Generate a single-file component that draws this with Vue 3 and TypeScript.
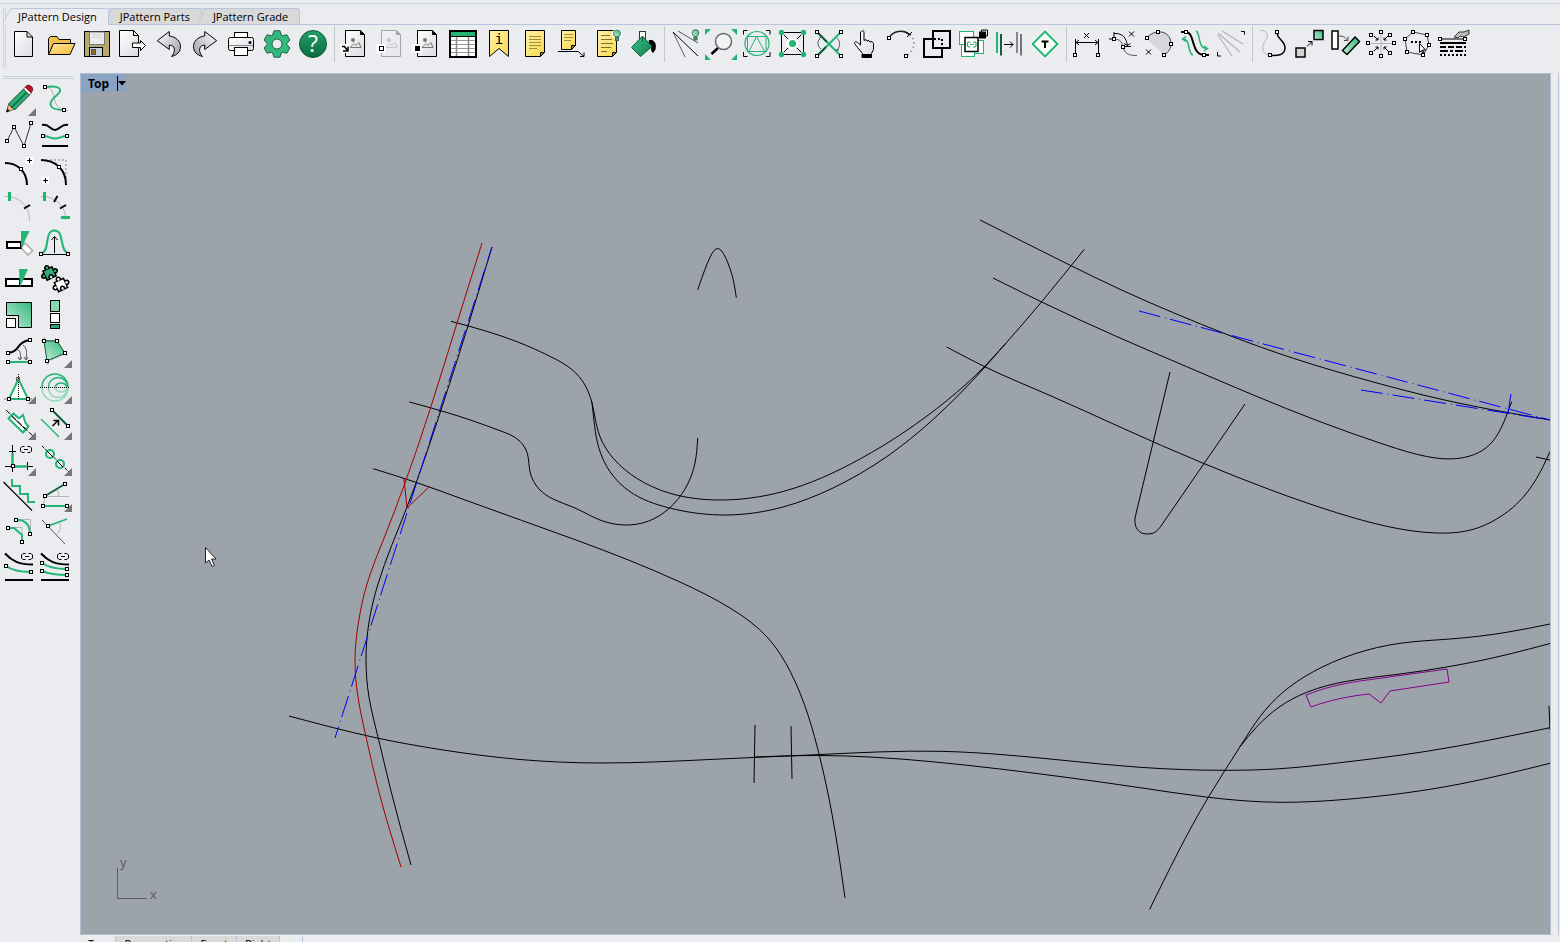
<script setup lang="ts">
interface Tool {
  name: string
  art: string
}
type Point = [number, number]

const G = '#22b573'
const D = '#0f5f3c'
const K = '#000'
const S = '#b4b4b4'

/* Small builders for the icon artwork, all on a 36 by 36 grid */
const line = (d: string, color = K, w = 1, extra = ''): string =>
  `<path d="${d}" fill="none" stroke="${color}" stroke-width="${w}" ${extra}/>`
const shape = (d: string, fill: string, color = K, w = 1): string =>
  `<path d="${d}" fill="${fill}" stroke="${color}" stroke-width="${w}"/>`
const box = (x: number, y: number, w: number, h: number, fill: string, color = K, sw = 1): string =>
  `<rect x="${x}" y="${y}" width="${w}" height="${h}" fill="${fill}" stroke="${color}" stroke-width="${sw}"/>`
const dot = (x: number, y: number, r: number, fill: string, color = 'none', sw = 1): string =>
  `<circle cx="${x}" cy="${y}" r="${r}" fill="${fill}" stroke="${color}" stroke-width="${sw}"/>`
const nodes = (...pts: Point[]): string =>
  pts.map(([x, y]) => box(Math.floor(x) - 1.5, Math.floor(y) - 1.5, 3, 3, '#fff')).join('')
const cross = (x: number, y: number): string => line(`M${x - 2.5} ${y - 2.5}l5 5m0-5l-5 5`)
const plus = (x: number, y: number): string =>
  box(x - 3, y - 3, 6, 6, '#fff', '#fff') + line(`M${x - 2.5} ${y}h5M${x} ${y - 2.5}v5`)
const corner = shape('M35 27v8h-8z', '#777', 'none')
const chain = (x: number, y: number): string =>
  line(`M${x - 1.5} ${y - 3}h-2.5l-1.5 1.5v3l1.5 1.5h2.5M${x + 1.5} ${y - 3}h2.5l1.5 1.5v3l-1.5 1.5h-2.5M${x - 2} ${y}h4`)
const bulb = (x: number, y: number): string =>
  dot(x, y - 1, 5, '#fff') +
  dot(x, y - 1.5, 3.5, 'url(#mint)', '#4d7a66') +
  box(x - 1.5, y + 2.5, 3, 3, '#3aa578', '#376b55')

const pictureDoc =
  shape('M8.5 4.5h15l4 4v22h-19z', 'url(#paper)') +
  shape('M23.5 4.5v4h4z', K) +
  dot(16, 14, 2, '#777') +
  line('M13 21.5l4-4 2 2 3-3 2 5z', '#777')
const note = (w: number, h: number): string => {
  const r = 8.5 + w
  const b = 4.5 + h
  return shape(`M8.5 4.5h${w}V${b - 4}L${r - 4} ${b}H8.5z`, 'url(#sun)') + shape(`M${r - 4} ${b}v-4h4z`, '#b5860b')
}

const gear = (() => {
  const pts: string[] = []
  for (let i = 0; i < 6; i++) {
    const mid = i * 60 - 90
    for (const [off, r] of [[-26, 10], [-17, 13.5], [17, 13.5], [26, 10]]) {
      const a = ((mid + off * (r > 11 ? 0.75 : 1)) * Math.PI) / 180
      pts.push(`${(18 + r * Math.cos(a)).toFixed(1)} ${(18 + r * Math.sin(a)).toFixed(1)}`)
    }
  }
  return `M${pts.join('L')}z`
})()

const undoArt = 'M6.3 14.7L18.3 5.5v4.5C25 11 29.5 15 29.5 20.5C29.5 26 26 29 20.5 30.5C24 27 25.5 19.5 18.3 19v4.5z'

const toolGroups: Tool[][] = [
  [
    { name: 'New', art: shape('M7.5 5.5H20l5.5 5.5v19.5h-18z', 'url(#paper)') + line('M20 5.5V11h5.5') },
    { name: 'Open', art: shape('M5.5 28.5V12.5l2-2h6.5l2 3h11.5v5', '#f0c04a') + shape('M5.5 28.5l5-11h21.5l-5 11z', 'url(#folder)') },
    {
      name: 'Save',
      art:
        box(5.5, 5.5, 25, 25, '#b5a96e') + box(10.5, 6, 15, 12.5, '#e9ecec', '#777') +
        line('M13 9h10M13 11.5h10', '#c9d3d0') + box(10.5, 21.5, 13, 9, '#c9cdd6') + box(12.5, 23.5, 4, 5, '#8a6d1e', '#555'),
    },
    { name: 'Export', art: shape('M4.5 4.5h14l5 5v21h-19z', 'url(#paper)') + line('M18.5 4.5v5h5') + shape('M17.5 17h8v-2.5l5 5-5 5v-3h-8z', '#fff') },
    { name: 'Undo', art: shape(undoArt, 'url(#steel)') },
    { name: 'Redo', art: `<g transform="matrix(-1 0 0 1 36 0)">${shape(undoArt, 'url(#steel)')}</g>` },
    {
      name: 'Print',
      art:
        box(11.5, 6.5, 13, 8, '#fff') + `<rect x="5.5" y="11.5" width="25" height="13" rx="2" fill="url(#paper)" stroke="#000"/>` +
        line('M6 19.5h24', '#888') + dot(27, 16.5, 1.5, K) + box(11.5, 21.5, 13, 8, '#fff'),
    },
    { name: 'Options', art: shape(gear, '#35b87f', '#1b5d42') + dot(18, 18, 5, '#ebecf0', '#1b5d42') },
    { name: 'Help', art: dot(18, 18, 13.5, 'url(#help)', '#0c5a33') + '<text x="18" y="26" font-size="23" text-anchor="middle" fill="#fff" font-family="Open Sans, sans-serif">?</text>' },
  ],
  [
    { name: 'Import image', art: pictureDoc + box(4, 18.5, 8, 8, '#fff', '#fff') + line('M5 20.5h2.5l3 4M11 20.5v4.5h-5', K, 1.5) },
    { name: 'Image frame', art: `<g opacity="0.3">${pictureDoc}</g>` + box(4, 18.5, 8, 8, '#fff', '#fff') + box(6.5, 20.5, 4, 4, '#fff') },
    { name: 'Image fill', art: pictureDoc + box(4, 18.5, 8, 8, '#fff', '#fff') + box(6.5, 20.5, 4, 4, K) },
    {
      name: 'Table',
      art:
        box(5, 5, 26, 26, '#fff', K, 2) + box(6, 6, 24, 4, G, 'none') + line('M6 10.5h24') +
        line('M6 14.5h24M6 18.5h24M6 22.5h24M6 26.5h24', '#999') + line('M11.5 11v19M23.5 11v19', '#888', 1.5),
    },
    { name: 'Bookmark', art: shape('M8.5 4.5h19v26l-9.5-8-9.5 8z', 'url(#sun)') + '<text x="18" y="18" font-size="14" text-anchor="middle" font-family="DejaVu Sans Mono, monospace">i</text>' },
    { name: 'Note', art: note(19, 26) + line('M12 10.5h12M12 13.5h12M12 16.5h12M12 19.5h12M12 22.5h8', '#a08a3c') },
    { name: 'Leader note', art: note(14, 19) + line('M11 8.5h9M11 11.5h9M11 14.5h7', '#a08a3c') + line('M5 25.5h20l6 5M27 30.5h4v-4') },
    { name: 'Note visibility', art: note(19, 26) + line('M12 9.5h9M12 13.5h11M12 17.5h12M12 21.5h10M12 25.5h6', '#7c6c35') + bulb(28, 9) },
    {
      name: 'Fill',
      art:
        shape('M24 14.5c6-1 7 4 6 9l-2 3c-2-1-1-5-3-8z', K) + box(14.5, 5.5, 6, 7, '#fff', '#333') +
        shape('M6.5 21.5l11-11.5L27 20.5 15.5 30.5z', 'url(#fill)', D) + line('M17.5 10v6', D),
    },
  ],
  [
    { name: 'Light', art: line('M6 6l12 25', '#666') + line('M6 6l25 24', K) + line('M11 5l20 12', '#555') + bulb(28.5, 8.5) },
    {
      name: 'Zoom',
      art:
        shape('M2 3h6l-6 6zM34 3h-6l6 6zM2 34h6l-6-6zM34 34h-6l6-6z', G, 'none') + line('M15 22l-6.5 6', K, 2.5) +
        dot(20.5, 15.5, 8, '#f2f3f5', '#666', 1.5),
    },
    { name: 'Zoom shapes', art: line('M4.5 8.5v-4h4M27 4.5h4v4M4.5 26v4.5h4M27 30.5h4v-4.5') + dot(18, 17.5, 12, 'none', G, 1.2) + line('M8.5 25.5v-15h18.5v15zM10 25.5l7.5-15 8 15', G) },
    {
      name: 'Control points',
      art: box(6.5, 6.5, 22, 22, 'none') + line('M9 9l17 17M26 9L9 26') + dot(17.5, 17.5, 6, '#fff') + dot(17.5, 17.5, 3.5, G) +
        dot(6.5, 6.5, 2.7, G) + dot(28.5, 6.5, 2.7, G) + dot(6.5, 28.5, 2.7, G) + dot(28.5, 28.5, 2.7, G),
    },
    {
      name: 'Swap ends',
      art:
        line('M6 6l24 24M30 6L6 30', G, 2) + line('M15 21l-9 9M6 6l10 10', D, 2) + line('M10 11c-4 4-4 9 0 12M8 13l2-2 2 2M26 12c4 4 3 9 0 12M24 23l2 2 2-2', '#555') +
        nodes([6, 6], [30, 6], [6, 30], [30, 30]),
    },
    { name: 'Pan', art: shape('M14.5 5.5c1-1.5 2.5-1 2.5 1v8l2-1 1 1.5 2-.5 1 1.5 2-.5 1.5 2v6l-2 4v4h-9v-4l-5-6-3-4c0-2 2-2 3-1l3 2.5v-13z', 'url(#paper)') + box(15, 28.5, 9, 2.5, K) },
    { name: 'Arc', art: line('M6 12C10 5 20 3 26.5 8.5', '#222', 1.5) + line('M26.5 8.5C33 14 33 23 23 30', '#888', 1.5, 'stroke-dasharray="1.5 3"') + line('M24 11l5-5M22 6l6 3') + nodes([6, 12], [23, 30]) },
    { name: 'Boolean', art: line('M5 13h18v18h-18zM14 5h17v17h-17z', K, 2) + line('M15 13h8v8', '#ebecf0', 2) + line('M15 13h8v8', K, 2, 'stroke-dasharray="2 2"') },
    {
      name: 'Linked copies',
      art:
        box(4.5, 5.5, 14, 13, '#fff', G) + box(14.5, 14.5, 14, 13, '#fff', G) + box(6.5, 18.5, 13, 12, '#fff', G) +
        box(10, 11.5, 13, 14, '#fff', K, 1.5) + line('M15.5 16h-2l-1 1v3l1 1h2M18 16h2l1 1v3l-1 1h-2M15 18.5h4', G, 1.2) +
        box(24.5, 6, 6, 6, K) + line('M26.5 6v-2h6v6h-2'),
    },
    { name: 'Offset lines', art: line('M6 6v21', G, 2) + line('M10 8v21.5', D, 2) + line('M13 18.5h9M19 15.5l3 3-3 3') + line('M26 6v21', '#888', 2) + line('M30 8v21.5', '#777', 2) },
    { name: 'Text tag', art: line('M18 5.5L30.5 18 18 30.5 5.5 18z', '#fff', 4) + shape('M18 5.5L30.5 18 18 30.5 5.5 18z', '#f6fbf8', G, 2) + line('M14.5 15.5h7M18 15v7', K, 2) },
  ],
  [
    { name: 'Linear dimension', art: line('M6.5 13v15M29.5 13v15M7 16.5h22M10 14l-3 2.5 3 2.5M26 14l3 2.5-3 2.5') + cross(17.5, 9.5) + nodes([6, 29], [29, 29]) },
    { name: 'Curve dimension', art: line('M9 13C19 13 16 21 19 21M18 21C20 27 22 29.5 32 29.5', '#555') + line('M4 13h5M9 6v6M9 7.5C18 7 21 12 22.5 19.5M19 17.5l3.5 2 3-2M20 20.5h6') + cross(26.5, 8) + nodes([9, 13], [18, 21]) },
    { name: 'Arc dimension', art: shape('M6 12C12 2 30 4 30 18C30 22 27 27 23 29L8 15z', '#d6d7db', 'none') + line('M6 12C12 3 30 3 30 18C30 22 28 26 23 29', '#444') + cross(7.5, 26) + nodes([6, 12], [17, 6], [30, 18], [23, 29]) },
    {
      name: 'Match curves',
      art:
        line('M16 29C10 27 14 13 6 13M9 10.5l-3.5 2.5 3.5 2.5', G, 1.5) + line('M19 5C24 7 20 22.5 30 22.5M27 20l3.5 2.5-3.5 2.5', G, 1.5) +
        line('M4 6h5c9 0 5 23 18 23h5', K, 2) + nodes([9, 6], [27, 29]),
    },
    { name: 'Fan lines', art: line('M5 9l14 21M5 7l22 19M9 5l21 13', S, 1.2) + line('M28 5.5h3.5v3M4.5 26v4h3.5') },
  ],
  [
    { name: 'Sketch curve', art: line('M5 4.5C16 4 12 13 9 17C6 23 9 29 15 29.5', S) + line('M22 6C22 14 30 14 30 22C30 29 23 30 15 29.5', K, 1.5) + nodes([22, 6], [15, 29]) },
    { name: 'Move', art: box(5, 22, 9, 9, '#d4d4d4', K, 1.5) + box(23, 4.5, 9, 9, 'url(#mint)', K, 1.5) + line('M16 20.5l5-5M17 15.5h4v4') },
    { name: 'Rotate', art: box(5, 5, 6, 18, '#fff', K, 1.5) + shape('M15.5 24.5L28 11l4.5 4.5L20 28.5z', 'url(#mint)', K, 1.5) + line('M12 10c5 0 7 2 8 4.5M17 14.5h4v-4', '#444') },
    {
      name: 'Gather',
      art:
        line('M5 17.5h26M18 6v24', S) + line('M11 10l4 4M25 10l-4 4M11 25l4-4M25 25l-4-4M15 11.5v2.5h-2.5M21 11.5v2.5h2.5M15 23.5v-2.5h-2.5M21 23.5v-2.5h2.5') +
        nodes([18, 6], [27, 9], [31, 17], [27, 27], [18, 30], [8, 27], [5, 17], [8, 9]),
    },
    { name: 'Select points', art: line('M14 6l14 3 2 10-6 10-16-3-2-13z', '#444') + line('M12 16h10', K, 2, 'stroke-dasharray="2 2"') + shape('M20.5 17.5v9l2-2 1.5 3 1-.5-1.5-3h3z', '#fff') + nodes([14, 6], [28, 9], [30, 19], [24, 29], [8, 26], [6, 13]) },
    {
      name: 'Line types',
      art:
        line('M5 13h25') + line('M5 17h26', K, 2) + line('M5 21h26', K, 2, 'stroke-dasharray="6 2"') + line('M5 25h26', K, 2, 'stroke-dasharray="8 2 3 2"') +
        line('M5 29h26', K, 2, 'stroke-dasharray="2 2"') + shape('M19 11l5-5h5l5-2v4l-5 3-4-1-2 2z', '#bbb', '#333') + nodes([5, 13], [30, 13]),
    },
  ],
]

/* Jigsaw piece: round knobs at the top and sides, a notch at the bottom */
const puzzle =
  'M-5-5h3.5a2 2 0 1 1 3 0h3.5v3.5a2 2 0 1 1 0 3v3.5h-3.5a2 2 0 1 0-3 0h-3.5v-3.5a2 2 0 1 1 0-3z'

const sideTools: Tool[] = [
  {
    name: 'Pencil',
    art:
      shape('M5.5 31l2.5-8 5 5z', '#555', K) + shape('M7.5 23L22.5 8l6 6L13.5 29z', G, '#333') + shape('M7.5 23.5l-1 4 2.5 2.5 4-1.5z', '#e7b98c', '#555', 0.5) +
      line('M10.5 26.5l15-15', D, 1.5) + shape('M22.5 8l2-2 6 6-2 2z', '#fff', '#555') + shape('M24.5 6l1.5-1.5c3-1 6.5 2 5.5 5l-1.5 2z', '#c1121f', '#700') + corner,
  },
  { name: 'Free curve', art: line('M8 6C16 6 16 14 18 20C20 26 22 29 31 29.5', S) + line('M8 6C22 4 27 8 20 14C10 22 11 29 27 29', G, 2) + nodes([8, 6], [27, 29]) },
  { name: 'Polyline', art: line('M6 24l7-14 10 19 7-23', '#333') + nodes([6, 24], [13, 10], [23, 29], [30, 6]) },
  { name: 'Parallel curve', art: line('M5 8C12 6 13 13 18 13S25 6 31 8', K, 2) + line('M6 19C12 19 13 21.5 18 21.5S24 19 30 19', G, 2) + line('M5 29h26', K, 2) + nodes([6, 19], [30, 19]) },
  { name: 'Add point', art: line('M4 10C16 10 26 18 26 32', K, 2) + nodes([20, 16]) + plus(28.5, 7.5) },
  { name: 'Add corner point', art: line('M13 7h16v18', S, 2, 'stroke-dasharray="2 2"') + line('M4 7C18 7 29 16 29 32', K, 2) + nodes([22, 14]) + plus(8.5, 27.5) },
  { name: 'Mark curve', art: line('M4 7.5C18 7 29 17 28.5 32', S) + line('M8.5 3v9', G, 3) + line('M23 19.5l6-3.5', K, 2) },
  { name: 'Divide curve', art: line('M4 7.5C18 7 29 17 28.5 31', S) + line('M7.5 3v9', G, 3) + line('M17 13l3.5-6M23 19.5l6-3.5', K, 2) + line('M24 28.5h9', G, 3) },
  { name: 'Cut segment', art: shape('M24 18l7.5 7.5-4.5 4.5-7-7z', '#fff', '#aaa', 1.5) + box(6, 17, 14, 6, '#fff', K, 2) + shape('M20 6h8.5l-8.5 18z', G, 'none') },
  { name: 'Bell curve', art: line('M5 28C13 26 7 5.5 17.5 5.5S22 26 31 28', G, 2) + line('M17.5 28V12M14.5 15l3-3.5 3 3.5M4 29.5h28') + nodes([4, 29], [31, 29]) },
  { name: 'Split segment', art: box(5, 18, 26, 7, '#fff', K, 2) + line('M18.5 18v7', K) + shape('M18 8h9l-8 18z', G, 'none') },
  {
    name: 'Join pieces',
    art: `<g transform="translate(12.5 12.5) rotate(-25)">${shape(puzzle, '#35a877', K, 1.5)}</g><g transform="translate(24 24) rotate(-25)">${shape(puzzle, '#fff', K, 1.5)}</g>`,
  },
  { name: 'Scale piece', art: shape('M5.5 5.5h25v25h-13v-12h-12z', 'url(#mint)') + box(5.5, 21.5, 9, 9, '#fff') },
  { name: 'Stack pieces', art: box(13.5, 3.5, 9, 11, '#8bd8b0') + box(13.5, 16.5, 9, 9, '#fff') + box(13.5, 27.5, 9, 4, '#2ea574') },
  { name: 'Straighten', art: line('M7 20C19 19 15 9 29 7', K, 2) + line('M16 16c4 2 4 7 3 10M22 12c4 3 4 8 3 14M17 24l2 3 2-3M23 24l2 3 2-3', '#555') + line('M7 29h22', G, 2) + nodes([7, 20], [29, 7], [7, 29], [29, 29]) },
  { name: 'Polygon area', art: line('M4 7.5h19M7 4l4 28M18 5l12 18M8 29l22-9', '#999') + shape('M7 8h13l8 12-18 8z', 'url(#mint)', D) + nodes([7, 8], [20, 8], [28, 20], [10, 28]) + corner },
  { name: 'Dart', art: line('M3 30h28', '#777') + shape('M17.5 10L8 30h19z', '#fff', G, 2) + line('M17.5 5v25', K, 1, 'stroke-dasharray="1 1"') + nodes([8, 30], [27, 30]) + box(15.5, 8.5, 3, 3, 'none', '#666') + corner },
  {
    name: 'Mirror circles',
    art:
      line('M5 18a13 13 0 0 1 26 0M11.5 18a9.5 9.5 0 0 1 19 0M18 18a6.5 6.5 0 0 1 12 0', G, 1.5) +
      line('M5 19a13 13 0 0 0 26 0M11.5 19a9.5 9.5 0 0 0 19 0M18 19a6.5 6.5 0 0 0 12 0', '#92d9b6', 1.5) + line('M3 18.5h29', K, 1, 'stroke-dasharray="1 1"') + corner,
  },
  { name: 'Seam strip', art: shape('M12.5 8.5l5.5 5 4-3.5 2.5 8 3 3.5-5.5 6L7.5 13.5z', '#fff', G, 2) + line('M5 5l28 27', K, 1, 'stroke-dasharray="6 2"') + line('M11 11.5L24 24') + corner },
  { name: 'Move parallel', art: line('M15 5l16 16', D, 2) + line('M4 14l18 18', G, 1.5) + line('M15.5 21l6-6M16.5 15.5h5v5', K, 1.5) + nodes([15, 5], [31, 21]) + corner },
  { name: 'Square up', art: line('M11.5 4v27M4 25.5h28M8 10.5h7M26.5 21v8') + line('M11.5 12v13.5h15', G, 2.5) + nodes([12, 25]) + chain(25, 8.5) + corner },
  { name: 'Circles on line', art: line('M5 5l28 27', K, 1, 'stroke-dasharray="3 1"') + dot(13, 13, 4, '#ebecf0', G, 2) + dot(23, 23, 4, '#ebecf0', G, 2) + line('M10 10l6 6M20 20l6 6') + corner },
  { name: 'Steps', art: line('M2.5 5L31 33.5', K, 1.2) + line('M11 2v7h8v8h8v8h7', G, 2) },
  { name: 'Angle copy', art: line('M8 19.5h24M8 19l-2 10M20 13q3 3 1 7', S) + line('M8 19l20-12', D, 2) + line('M6 29h24', G, 2) + nodes([8, 19], [28, 7], [6, 29], [30, 29]) + corner },
  { name: 'Fillet', art: line('M15 6.5h14.5v14M7 14.5h14v14', S) + line('M15 7C24 6 29 12 29 21M7 15h6L21 22v7', G, 2) + nodes([15, 7], [29, 21], [7, 15], [21, 29]) },
  { name: 'Angle', art: line('M5 7l23 24', '#555') + line('M22 9c3 5 1 10-3 13', S) + line('M11 13l19-7', G, 1.5) + nodes([11, 13]) },
  { name: 'Linked offset', art: line('M4 4.5C11 12 18 15.5 32 15.5', K, 2) + line('M5 17C12 22 20 23 30 23', G, 2) + line('M4 31h28', K, 2) + nodes([5, 17], [30, 23]) + chain(26, 7.5) },
  {
    name: 'Linked multi offset',
    art: line('M4 4.5C11 12 18 15.5 32 15.5', K, 2) + line('M5 14C12 19 20 20 30 20M5 22C12 25 20 26 30 26', G, 2) + line('M4 31h28', K, 2) + nodes([5, 14], [30, 20], [5, 22], [30, 26]) + chain(26, 7.5),
  },
]

const tabs = ['JPattern Design', 'JPattern Parts', 'JPattern Grade']
const activeTab = tabs[0]
const viewTabs = ['Top', 'Perspective', 'Front', 'Right', '+']

/* Slopes of a natural cubic spline over knot spacing h */
function slopes(v: number[], h: number[]): number[] {
  const n = v.length
  const a = new Array<number>(n).fill(0)
  const b = new Array<number>(n).fill(2)
  const c = new Array<number>(n).fill(0)
  const r = new Array<number>(n).fill(0)
  c[0] = 1
  r[0] = (3 * (v[1] - v[0])) / h[0]
  a[n - 1] = 1
  r[n - 1] = (3 * (v[n - 1] - v[n - 2])) / h[n - 2]
  for (let i = 1; i < n - 1; i++) {
    a[i] = 1 / h[i - 1]
    c[i] = 1 / h[i]
    b[i] = 2 * (a[i] + c[i])
    r[i] = 3 * ((v[i] - v[i - 1]) / h[i - 1] ** 2 + (v[i + 1] - v[i]) / h[i] ** 2)
  }
  for (let i = 1; i < n; i++) {
    const m = a[i] / b[i - 1]
    b[i] -= m * c[i - 1]
    r[i] -= m * r[i - 1]
  }
  const out = new Array<number>(n).fill(0)
  out[n - 1] = r[n - 1] / b[n - 1]
  for (let i = n - 2; i >= 0; i--) out[i] = (r[i] - c[i] * out[i + 1]) / b[i]
  return out
}

/* Smooth curve through a flat list of x, y pairs */
function spline(flat: number[]): string {
  const x = flat.filter((_, i) => i % 2 === 0)
  const y = flat.filter((_, i) => i % 2 === 1)
  const h = x.slice(1).map((v, i) => Math.hypot(v - x[i], y[i + 1] - y[i]))
  const sx = slopes(x, h)
  const sy = slopes(y, h)
  let d = `M${x[0]} ${y[0]}`
  h.forEach((len, i) => {
    const k = len / 3
    const c = [x[i] + sx[i] * k, y[i] + sy[i] * k, x[i + 1] - sx[i + 1] * k, y[i + 1] - sy[i + 1] * k]
    d += `C${c.map((v) => v.toFixed(2)).join(' ')} ${x[i + 1]} ${y[i + 1]}`
  })
  return d
}

const blackCurves: string[] = [
  [492, 247, 468, 326, 441, 410, 407, 507, 378, 584, 369, 622, 366, 660, 369, 697, 378, 737, 391, 791, 411, 865],
  [451, 321.3, 486.7, 331.3, 517, 341.7, 553.3, 358, 571.7, 369.3, 585, 385, 591.7, 402, 594.5, 415, 600, 436.7, 613.3, 458.3, 636.7, 478.3, 670, 493.3, 720, 500, 783, 491.5, 860, 459, 946.7, 400.7, 984.3, 366.7, 1006.7, 342.3, 1041.7, 301.7, 1084.3, 249.3],
  [592, 402, 594.7, 426.7, 598.5, 446.7, 610, 471.7, 630, 491.7, 668.3, 507.7, 727, 515, 783, 507, 833, 488, 887, 456.5, 933, 419.5, 985, 367, 1006.7, 342.3],
  [409.3, 402, 440.7, 410.7, 473.3, 421, 500, 430.7, 520, 441.3, 527.3, 453.3, 530, 471.7, 540, 490, 552, 498.5, 575, 508, 600, 520, 625, 525, 648.3, 521.2, 669, 508.5, 685, 489, 695, 463, 697.7, 438],
  [373.3, 468.7, 417, 482.7, 467, 500.7, 576, 540, 680, 582, 730, 608, 768, 638, 791, 673, 808, 715, 820, 758, 832, 814, 845, 898],
  [697.7, 290, 706.7, 265, 717.7, 248.5, 728.3, 264, 736.3, 297.7],
  [289, 716, 377, 738, 440, 749.5, 520, 759.5, 600, 763, 720, 759, 820, 754.5, 940, 751.3, 1070, 761, 1140, 767.3, 1225, 770.3, 1280, 768.7, 1340, 762.7, 1426.7, 751.3, 1550, 727.7],
  [754, 757, 820, 755.5, 870, 757, 930, 761.5, 1000, 769, 1140, 787.7, 1208.3, 797.3, 1280, 802.3, 1346.7, 799.3, 1460, 784, 1550, 763.3],
  [1149.7, 909.3, 1208.3, 797.3, 1240, 746.7, 1260, 716.7, 1281.7, 693.3, 1313.3, 671.7, 1353.3, 654.3, 1400, 643.3, 1450, 639, 1506.7, 632.3, 1550, 624],
  [1240, 746.7, 1257, 726.5, 1280, 706.5, 1306.7, 692.3, 1346.7, 681.3, 1400, 674, 1446.7, 667, 1506.7, 654.7, 1550, 643.5],
  [980, 220, 1071.7, 266, 1120, 289.3, 1173.3, 312.7, 1230, 335.7, 1293.3, 358.3, 1373.3, 382, 1440, 399, 1508.3, 412.7, 1550, 420],
  [993, 278, 1041.7, 302, 1120, 338, 1186.7, 366.7, 1253.3, 395, 1320, 421.7, 1386.7, 445.3, 1426.7, 456.5, 1448.3, 458.9, 1470, 456, 1486.7, 447.3, 1498.3, 433.3, 1507.7, 412.3, 1511.7, 401.7],
  [946.7, 347, 986, 367.3, 1050, 395.5, 1120, 427, 1203.3, 463.3, 1270, 489.7, 1336.7, 512.7, 1386.7, 526.3, 1436.7, 533, 1473.3, 529.3, 1496.7, 519, 1516.7, 504, 1536.7, 478.3, 1550, 451.7],
].map(spline)
blackCurves.push(
  'M1170 372L1135 518C1134 528 1139 534 1147 534S1157 531 1161 526L1245 404',
  'M755 725L754 783M791 726L792 779M1549 706L1550 730M1536 457L1550 460',
)
const redCurve = spline([482, 243, 457, 323, 430.5, 408, 405, 483, 383.3, 540, 367, 584, 358.5, 622, 355, 660, 358, 697, 366, 737, 379, 792, 401, 867])
</script>

<template>
  <div class="app">
    <svg class="defs" width="0" height="0" aria-hidden="true">
      <defs>
        <linearGradient id="paper" x1="0" y1="0" x2="1" y2="1"><stop offset="0" stop-color="#fff" /><stop offset="1" stop-color="#d9dbe0" /></linearGradient>
        <linearGradient id="steel" x1="0" y1="0" x2="1" y2="1"><stop offset="0" stop-color="#fff" /><stop offset="1" stop-color="#9a9da3" /></linearGradient>
        <linearGradient id="sun" x1="0" y1="0" x2="1" y2="1"><stop offset="0" stop-color="#fff2a8" /><stop offset="1" stop-color="#f8d84e" /></linearGradient>
        <linearGradient id="folder" x1="0" y1="0" x2="1" y2="1"><stop offset="0" stop-color="#ffe9a0" /><stop offset="1" stop-color="#f5b93a" /></linearGradient>
        <linearGradient id="mint" x1="0" y1="1" x2="1" y2="0"><stop offset="0" stop-color="#c2ecd6" /><stop offset="1" stop-color="#35b87f" /></linearGradient>
        <linearGradient id="fill" x1="0" y1="0" x2="1" y2="1"><stop offset="0" stop-color="#3cc48a" /><stop offset="1" stop-color="#0f7f4e" /></linearGradient>
        <linearGradient id="help" x1="0" y1="0" x2="0" y2="1"><stop offset="0" stop-color="#1fa066" /><stop offset="1" stop-color="#0c6b40" /></linearGradient>
      </defs>
    </svg>

    <header class="header">
      <div class="grip"></div>
      <div class="ribbon">
        <nav class="tabs">
          <button v-for="tab in tabs" :key="tab" type="button" class="tab" :class="{ active: tab === activeTab }">
            <span>{{ tab }}</span>
          </button>
        </nav>
        <div class="toolbar">
          <div v-for="(group, g) in toolGroups" :key="g" class="group">
            <button v-for="tool in group" :key="tool.name" type="button" class="tool" :aria-label="tool.name">
              <svg viewBox="0 0 36 36" v-html="tool.art"></svg>
            </button>
          </div>
        </div>
      </div>
    </header>

    <div class="body">
      <aside class="side">
        <div class="side-grip"></div>
        <div class="side-tools">
          <button v-for="tool in sideTools" :key="tool.name" type="button" class="tool" :aria-label="tool.name">
            <svg viewBox="0 0 36 36" v-html="tool.art"></svg>
          </button>
        </div>
      </aside>

      <main class="viewport">
        <svg class="scene" viewBox="81 74 1469 860" preserveAspectRatio="xMinYMin slice">
          <g class="black"><path v-for="(d, i) in blackCurves" :key="i" :d="d" /></g>
          <g class="red">
            <path :d="redCurve" />
            <path d="M404 479L407 508L429 487" />
          </g>
          <g class="blue">
            <path class="long" d="M335 738L492 247" />
            <path d="M1139 311L1550 420M1361 390L1550 420" />
            <path class="solid" d="M1511 394L1508 413" />
          </g>
          <path class="purple" d="M1306 695C1324 688 1340 684 1360 681L1447 669L1449 682L1390 691L1381 703L1369 694C1350 696 1330 700 1311 707Z" />
          <g class="axis">
            <path d="M117.5 868V898.5H147" />
            <text x="120" y="867">y</text>
            <text x="150" y="899">x</text>
          </g>
          <path class="pointer" d="M205.5 547.5V563L209 560L212 566.5L214.5 565.5L211.5 559H216Z" />
        </svg>
        <button type="button" class="view-title">
          <span>Top</span>
          <svg width="9" height="15" viewBox="0 0 9 15"><path d="M.5 0V15" stroke="#000" /><path d="M1 5H9L5 9.5Z" /></svg>
        </button>
      </main>
      <div class="edge"></div>
    </div>

    <footer class="view-tabs">
      <button v-for="(tab, i) in viewTabs" :key="tab" type="button" :class="{ current: i === 0 || i === 4 }">{{ tab }}</button>
    </footer>
  </div>
</template>

<style>
body {
  margin: 0;
  background: #ebecf0;
}
</style>

<style scoped>
.app {
  display: flex;
  flex-direction: column;
  height: 100vh;
  overflow: hidden;
  background: #ebecf0;
  color: #000;
  font: 11px 'Open Sans', 'Noto Sans', sans-serif;
}
.defs {
  position: absolute;
}
button {
  margin: 0;
  padding: 0;
  border: 0;
  background: none;
  color: inherit;
  font: inherit;
}
.header {
  display: flex;
  margin-top: 3px;
  border-top: 1px solid #ccd2e0;
}
.grip {
  box-sizing: border-box;
  width: 3px;
  margin: 4px 1px 5px 3px;
  border: 1px solid #ccd2e0;
  border-width: 0 1px;
}
.ribbon {
  flex: 1;
  min-width: 0;
}
.tabs {
  display: flex;
  padding-top: 4px;
  border-bottom: 1px solid #b9c5dc;
}
.tab {
  box-sizing: border-box;
  position: relative;
  height: 16px;
  padding: 0 11px;
  line-height: 16px;
  border-top: 1px solid #b9c5dc;
  border-right: 1px solid #b9c5dc;
  border-radius: 0 3px 0 0;
  background: #d9d9da;
  white-space: nowrap;
}
.tab::before {
  content: '';
  position: absolute;
  top: -1px;
  bottom: 0;
  left: -1px;
  width: 12px;
  border-top: 1px solid #b9c5dc;
  border-left: 1px solid #b9c5dc;
  border-radius: 3px 0 0;
  background: #d9d9da;
  transform: skewX(-26deg);
}
.tab:first-child {
  border-top-left-radius: 10px;
}
.tab.active {
  z-index: 1;
  height: 17px;
  margin-bottom: -1px;
}
.tab.active,
.tab.active::before {
  background: #ebecf0;
}
.tab span {
  position: relative;
}
.toolbar {
  display: flex;
  padding: 1px 0 11px;
}
.group {
  display: flex;
}
.group + .group {
  margin-left: 3px;
  padding-left: 2px;
  border-left: 1px solid #c4c5ca;
}
.tool {
  width: 36px;
  height: 36px;
  flex: none;
}
.tool svg {
  display: block;
  width: 36px;
  height: 36px;
}
.body {
  display: flex;
  flex: 1;
  min-height: 0;
}
.side {
  width: 80px;
  flex: none;
}
.side-grip {
  height: 1px;
  margin: 3px 6px 2px 3px;
  border: 1px solid #ccd2e0;
  border-width: 1px 0;
}
.side-tools {
  display: grid;
  grid-template-columns: 36px 36px;
  padding-left: 1px;
}
.viewport {
  position: relative;
  flex: 1;
  min-width: 0;
  border: 1px solid #b0bdd3;
  background: #9da3ab;
  overflow: hidden;
}
.scene {
  display: block;
  width: 100%;
  height: 100%;
}
.scene path {
  fill: none;
  stroke-width: 1;
}
.black path {
  stroke: #000;
}
.red path {
  stroke: #a00000;
}
.blue path {
  stroke: #00f;
  stroke-dasharray: 22 5 1 4;
}
.blue .long {
  stroke-dashoffset: 10;
}
.blue .solid {
  stroke-dasharray: none;
}
.scene .purple {
  stroke: #8b008b;
}
.axis path {
  stroke: #5a5d5b;
}
.axis text {
  fill: #5a5d5b;
  font: 13px 'Open Sans', sans-serif;
}
.scene .pointer {
  fill: #fff;
  stroke: #222;
}
.view-title {
  position: absolute;
  top: 0;
  left: 0;
  display: flex;
  align-items: center;
  gap: 8px;
  height: 18px;
  padding: 0 0 0 7px;
  background: #8aa3c3;
  font: 700 12px 'Noto Sans', sans-serif;
}
.edge {
  width: 7px;
  flex: none;
  border-right: 1px solid #b9c5dc;
  margin-right: 1px;
}
.view-tabs {
  display: flex;
  flex: none;
  height: 6px;
  margin: 1px 0 0 80px;
  overflow: hidden;
}
.view-tabs button {
  height: 20px;
  padding: 1px 8px 5px;
  border-right: 1px solid #b9c5dc;
  background: #d9d9da;
  line-height: 14px;
}
.view-tabs .current {
  background: #ebecf0;
}
</style>
